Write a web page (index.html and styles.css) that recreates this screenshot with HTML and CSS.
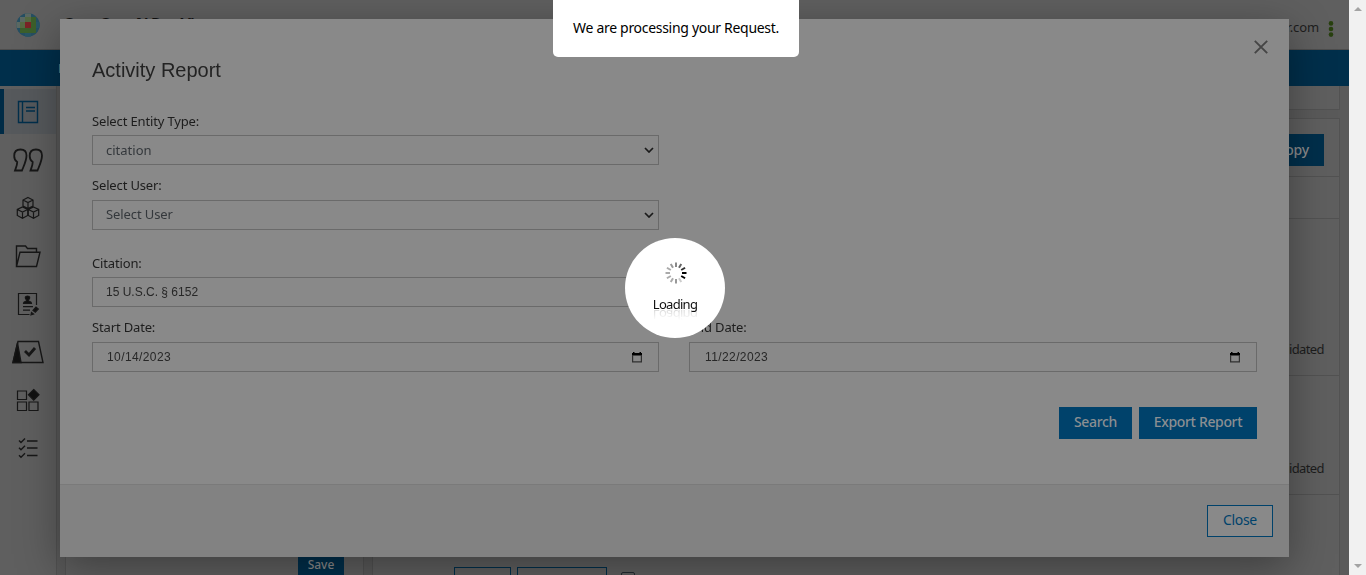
FILE: index.html
```html
<!DOCTYPE html>
<html lang="en">
<head>
<meta charset="utf-8">
<title>Activity Report</title>
<link rel="stylesheet" href="styles.css">
</head>
<body>
<div class="app">
  <div class="page">
    <header class="topbar">
      <svg class="logo" width="24" height="24" viewBox="0 0 24 24"><defs><clipPath id="c"><circle cx="12" cy="12" r="11.7"/></clipPath></defs><g clip-path="url(#c)"><path fill="#254f62" d="M0 0h24v24H0z"/><path fill="#3c5f2b" d="M4 4h16v16H4z"/><path fill="#5b6963" d="M9 0h6v4H9zM0 9h4v6H0zM4 4h5v5H4z"/><path fill="#556a42" d="M9 4h6v5H9zM4 9h5v6H4z"/><path fill="#285565" d="M20 9h4v6h-4zM9 20h6v4H9z"/><path fill="#7a2426" d="M9 9h6v6H9z"/></g></svg>
      <span class="brand">Core Core N Rev Vi</span>
      <span class="mail">user@wolterskluwer.com</span>
      <svg class="dots" width="6" height="16" viewBox="0 0 6 16"><g fill="#28400f"><circle cx="3" cy="2.4" r="2.3"/><circle cx="3" cy="8" r="2.3"/><circle cx="3" cy="13.6" r="2.3"/></g></svg>
    </header>
    <nav class="navbar"><span>Home</span></nav>
    <div class="body">
      <aside class="side">
        <div class="item active"><svg width="32" height="32" viewBox="0 0 32 32" class="ic blue"><path d="M6.500 5.500h19v21h-19zM10.500 5.500v21M14 11.500h9M14 15h9"/></svg></div>
        <div class="item"><svg width="32" height="32" viewBox="0 0 32 32" class="ic"><path d="M8.500 5.500c4 0 6 2.500 6 6 0 5-2.300 9.500-4.500 15H3c1-3 2.200-5 2.200-8.500C2.800 16.500 2.200 14 2.200 12c0-4 2.300-6.500 6.300-6.500zM24 5.500c4 0 6 2.500 6 6 0 5-2.300 9.500-4.500 15h-7c1-3 2.200-5 2.200-8.500-2.400-1.500-3-4-3-6 0-4 2.300-6.500 6.300-6.500z"/></svg></div>
        <div class="item"><svg width="32" height="32" viewBox="0 0 32 32" class="ic thin"><path d="M16 5.500l5 2.500v6l-5 2.500-5-2.500V8zM11 8l5 2.500L21 8M16 10.500v6M10.500 15l5.200 2.500v6l-5.200 2.700-5.200-2.700v-6zM5.300 17.500l5.200 2.500 5.200-2.500M10.500 20v6M21.500 15l5.200 2.500v6l-5.200 2.700-5.200-2.700v-6zM16.300 17.500l5.200 2.500 5.200-2.500M21.500 20v6"/></svg></div>
        <div class="item"><svg width="32" height="32" viewBox="0 0 32 32" class="ic mid"><path d="M4.500 26V6h9l2 2.500h9V12M4.500 26.500L8 12.200h20L24.500 26.500z"/></svg></div>
        <div class="item"><svg width="32" height="32" viewBox="0 0 32 32" class="ic thin"><path d="M24.500 17V5.500h-18v21h11M11 18.700h10M11 22.200h7"/><path class="fill" d="M11.500 15.500c0-2 1.500-2 3-2.500v-1c-2-2-1.500-4 1-4s3 2 1 4v1c1.500.5 3 .5 3 2.500zM21 22.500l3-3.500 2.300 2-3 3.300zM19.500 24.500l2 1.500-2.500.8z"/></svg></div>
        <div class="item"><svg width="32" height="32" viewBox="0 0 32 32" class="ic mid"><path d="M6 5.500h20.500l4.500 21H1z"/><path class="fill" d="M5.500 7L9 26.500H1z"/><path d="M13 15l4 4 6-7" stroke-width="2.800"/></svg></div>
        <div class="item"><svg width="32" height="32" viewBox="0 0 32 32" class="ic thin"><path d="M5.500 7h9v8.500h-9zM5.500 18h9v8.500h-9zM17 18h9v8.500h-9z"/><path class="fill" d="M21.700 5.500l5.300 5.300-5.300 5.300-5.300-5.300z"/></svg></div>
        <div class="item"><svg width="32" height="32" viewBox="0 0 32 32" class="ic mid"><path d="M15 9h10.500M15 16h10.500M15 23.500h10.500M7 8.500l2 2 4-4M7 15.700l2 2 4-4M7 23.200l2 2 4-4"/></svg></div>
      </aside>
      <section class="left"><div class="save">Save</div></section>
      <section class="right">
        <div class="card card-top"></div>
        <div class="card card-main">
          <div class="row r1"><span class="copy">Copy</span></div>
          <div class="row r2"></div>
          <div class="row r3"><span>Validated</span></div>
          <div class="row r4"><span>Validated</span></div>
          <div class="row r5"><i class="ob o1"></i><i class="ob o2"></i><i class="cb"></i></div>
        </div>
      </section>
    </div>
  </div>
  <div class="scroll"><i class="up"></i><i class="down"></i></div>
</div>

<div class="modal">
  <div class="mbody">
    <svg class="x" width="14" height="14" viewBox="0 0 14 14"><path d="M.8.800l12.400 12.400M13.200.800L.800 13.200" stroke="#454545" stroke-width="1.900"/></svg>
    <h1>Activity Report</h1>
    <div class="form">
      <label class="l1"><span>Select Entity Type:</span></label>
      <div class="field sel"><span>citation</span><svg width="10" height="6" viewBox="0 0 10 6"><path d="M1 1l4 4 4-4"/></svg></div>
      <label class="l2"><span>Select User:</span></label>
      <div class="field sel"><span class="v2">Select User</span><svg width="10" height="6" viewBox="0 0 10 6"><path d="M1 1l4 4 4-4"/></svg></div>
      <label class="l3"><span>Citation:</span></label>
      <div class="field arial"><span>15 U.S.C. § 6152</span></div>
      <div class="dates">
        <div class="date"><label class="l4"><span>Start Date:</span></label>
          <div class="field arial"><span class="d">10/14/2023</span><svg class="cal" width="10" height="11" viewBox="0 0 10 11"><path fill="#000" d="M0 1h1V0h1.500v1h5V0H9v1h1v2.500H0z"/><path fill="none" stroke="#303030" stroke-width="1.200" d="M.6 3v6.900h8.800V3"/></svg></div></div>
        <div class="date"><label class="l4"><span>End Date:</span></label>
          <div class="field arial"><span class="d">11/22/2023</span><svg class="cal" width="10" height="11" viewBox="0 0 10 11"><path fill="#000" d="M0 1h1V0h1.500v1h5V0H9v1h1v2.500H0z"/><path fill="none" stroke="#303030" stroke-width="1.200" d="M.6 3v6.900h8.800V3"/></svg></div></div>
      </div>
    </div>
    <div class="actions"><button class="b b1">Search</button><button class="b b2">Export Report</button></div>
  </div>
  <div class="mfoot"><button class="b close">Close</button></div>
</div>

<div class="toast"><span>We are processing your Request.</span></div>
<div class="loader">
  <svg class="spin" width="22" height="22" viewBox="-11 -11 22 22" stroke-width="2"><path d="M0-6v-4.500" stroke="#888"/><path d="M0-6v-4.500" stroke="#666" transform="rotate(30)"/><path d="M0-6v-4.500" stroke="#333" transform="rotate(60)"/><path d="M0-6v-4.500" stroke="#000" transform="rotate(90)"/><path d="M0-6v-4.500" stroke="#000" transform="rotate(120)"/><path d="M0-6v-4.500" stroke="#ccc" transform="rotate(150)"/><path d="M0-6v-4.500" stroke="#999" transform="rotate(180)"/><path d="M0-6v-4.500" stroke="#aaa" transform="rotate(210)"/><path d="M0-6v-4.500" stroke="#aaa" transform="rotate(240)"/><path d="M0-6v-4.500" stroke="#aaa" transform="rotate(270)"/><path d="M0-6v-4.500" stroke="#aaa" transform="rotate(300)"/><path d="M0-6v-4.500" stroke="#999" transform="rotate(330)"/></svg>
  <span class="ld">Loading</span>
</div>
</body>
</html>
```
FILE: styles.css
```css
* { box-sizing: border-box; }
body { margin: 0; height: 575px; overflow: hidden; font-family: "Noto Sans", sans-serif; font-size: 13px; color: #1d1d1d; }
.app { display: flex; height: 575px; overflow: hidden; }
.page { flex: 1; min-width: 0; background: #5a5a5a; display: flex; flex-direction: column; }
.topbar { height: 50px; flex: none; display: flex; align-items: center; padding: 0 15px 0 16px; background: #5f5f5f; border-bottom: 1px solid #4d4d4d; }
.logo { margin-top: 1px; }
.brand { margin-left: 23px; margin-top: -2px; font-size: 16px; font-weight: 700; line-height: 24px; letter-spacing: -.9px; color: #101010; }
.mail { margin-left: auto; margin-top: 5px; letter-spacing: -.1px; }
.dots { margin: 9px 0 0 9px; }
.navbar { height: 36px; flex: none; background: #002f4b; color: #8a8a8a; padding: 9px 0 0 58px; line-height: 18px; }
.body { flex: 1; display: flex; min-height: 0; }
.side { width: 57px; flex: none; background: #5f5f5f; border-right: 1px solid #525252; padding-top: 3px; }
.item { height: 48px; padding: 7px 0 0 12px; }
.item.active { height: 45px; margin-bottom: 3px; background: #56595c; border-left: 4px solid #002b46; padding-left: 8px; }
.ic { display: block; fill: none; stroke: #171717; stroke-width: 1.800; }
.ic.mid { stroke-width: 1.400; }
.ic.thin { stroke-width: 1.200; }
.ic.blue { stroke: #002f4b; stroke-width: 1.400; }
.ic .fill { fill: #111; }
.left { width: 299px; flex: none; margin-left: 8px; background: #5f5f5f; border: 1px solid #525252; border-width: 0 1px; display: flex; justify-content: flex-end; align-items: flex-end; padding-right: 19px; }
.save { width: 46px; height: 22px; background: #002f4b; color: #8a8a8a; text-align: center; font-size: 12px; line-height: 24px; font-weight: 500; }
.right { flex: 1; margin: 0 9px 0 8px; display: flex; flex-direction: column; }
.card { background: #5f5f5f; border: 1px solid #525252; }
.card-top { height: 24px; flex: none; border-top: 0; margin-bottom: 8px; }
.card-main { flex: 1; min-height: 0; border-bottom: 0; }
.row { border-bottom: 1px solid #525252; display: flex; justify-content: flex-end; padding-right: 15px; }
.r1 { height: 58px; padding-top: 15px; }
.copy { width: 70px; height: 32px; background: #002f4b; color: #8b8b8b; font-size: 14px; font-weight: 500; line-height: 32px; text-align: right; padding-right: 15px; letter-spacing: -.2px; }
.r2 { height: 42px; }
.r3 { height: 157px; }
.r4 { height: 119px; }
.r3, .r4 { align-items: flex-end; padding-bottom: 17px; line-height: 17px; letter-spacing: -.6px; }
.r5 { height: 81px; border: 0; justify-content: flex-start; padding: 72px 0 0 81px; }
.ob { flex: none; border: 1px solid #002f4b; height: 32px; width: 57px; margin-right: 6px; }
.o2 { width: 90px; margin-right: 14px; }
.cb { flex: none; width: 14px; height: 14px; margin-top: 5px; border: 1px solid #242b31; border-radius: 2px; }
.scroll { width: 17px; background: #f1f1f1; display: flex; flex-direction: column; justify-content: space-between; align-items: center; padding: 7px 0; }
.scroll i { border: 4px solid transparent; }
.scroll .up { border-top: 0; border-bottom-color: #a3a3a3; }
.scroll .down { border-bottom: 0; border-top-color: #a3a3a3; }

.modal { position: fixed; left: 60px; top: 19px; width: 1229px; height: 538px; background: #898989; box-shadow: 0 11px 40px rgba(0,0,0,.35); display: flex; flex-direction: column; }
.mbody { flex: 1; padding: 39px 32px 0; }
.x { position: absolute; right: 21px; top: 21px; }
h1 { margin: 0; font: 400 20px/24px "Liberation Sans", sans-serif; color: #232323; }
label { display: block; height: 17px; line-height: 17px; font-size: 13px; letter-spacing: -.15px; }
.l1 { margin-top: 31px; margin-bottom: 5px; }
.l2 { margin-top: 12px; margin-bottom: 6px; }
.l3 { margin-top: 25px; margin-bottom: 5px; }
.l4 { margin-top: 12px; margin-bottom: 6px; }
.field { width: 567px; height: 30px; border: 1px solid #6a6a6a; padding: 0 14px 0 13px; display: flex; align-items: center; justify-content: space-between; color: #34383c; }
.sel { padding: 0 4px 0 13px; }
.v2 { padding-bottom: 2px; letter-spacing: -.1px; }
.sel svg { fill: none; stroke: #1a1a1a; stroke-width: 1.700; }
.arial { font: 12px "Liberation Sans", sans-serif; color: #272727; }
.arial .d { padding-left: 1px; letter-spacing: .4px; }
.cal { margin-right: 2px; }
.dates { display: flex; gap: 30px; }
.date:last-child .field { width: 568px; padding-left: 14px; }
.actions { display: flex; justify-content: flex-end; gap: 7px; margin-top: 35px; }
.b { font: 500 14px/18px "Noto Sans", sans-serif; height: 32px; border: 0; padding: 0 0 2px; background: #00426b; color: #8b8f92; white-space: nowrap; letter-spacing: -.35px; }
.b1 { width: 73px; }
.b2 { width: 118px; }
.mfoot { height: 73px; background: #828282; border-top: 1px solid #7a7a7a; display: flex; justify-content: flex-end; padding: 20px 16px 0 0; }
.close { width: 66px; background: #898989; border: 1px solid #00426b; color: #00426b; font-weight: 400; }
.toast { position: fixed; left: 553px; top: 0; width: 246px; height: 57px; background: #fff; border-radius: 0 0 5px 5px; color: #000; font-size: 14px; line-height: 56px; text-align: center; white-space: nowrap; letter-spacing: -.3px; }
.loader { position: fixed; left: 625px; top: 238px; width: 100px; height: 100px; border-radius: 50%; background: #fff; display: flex; flex-direction: column; align-items: center; padding-top: 24px; }
.spin { margin-left: 2px; }
.ld { margin-top: 11px; line-height: 18px; font-size: 13px; color: #111; letter-spacing: -.7px; -webkit-box-reflect: below -7px linear-gradient(transparent 20%, rgba(0,0,0,.22)); }
```
